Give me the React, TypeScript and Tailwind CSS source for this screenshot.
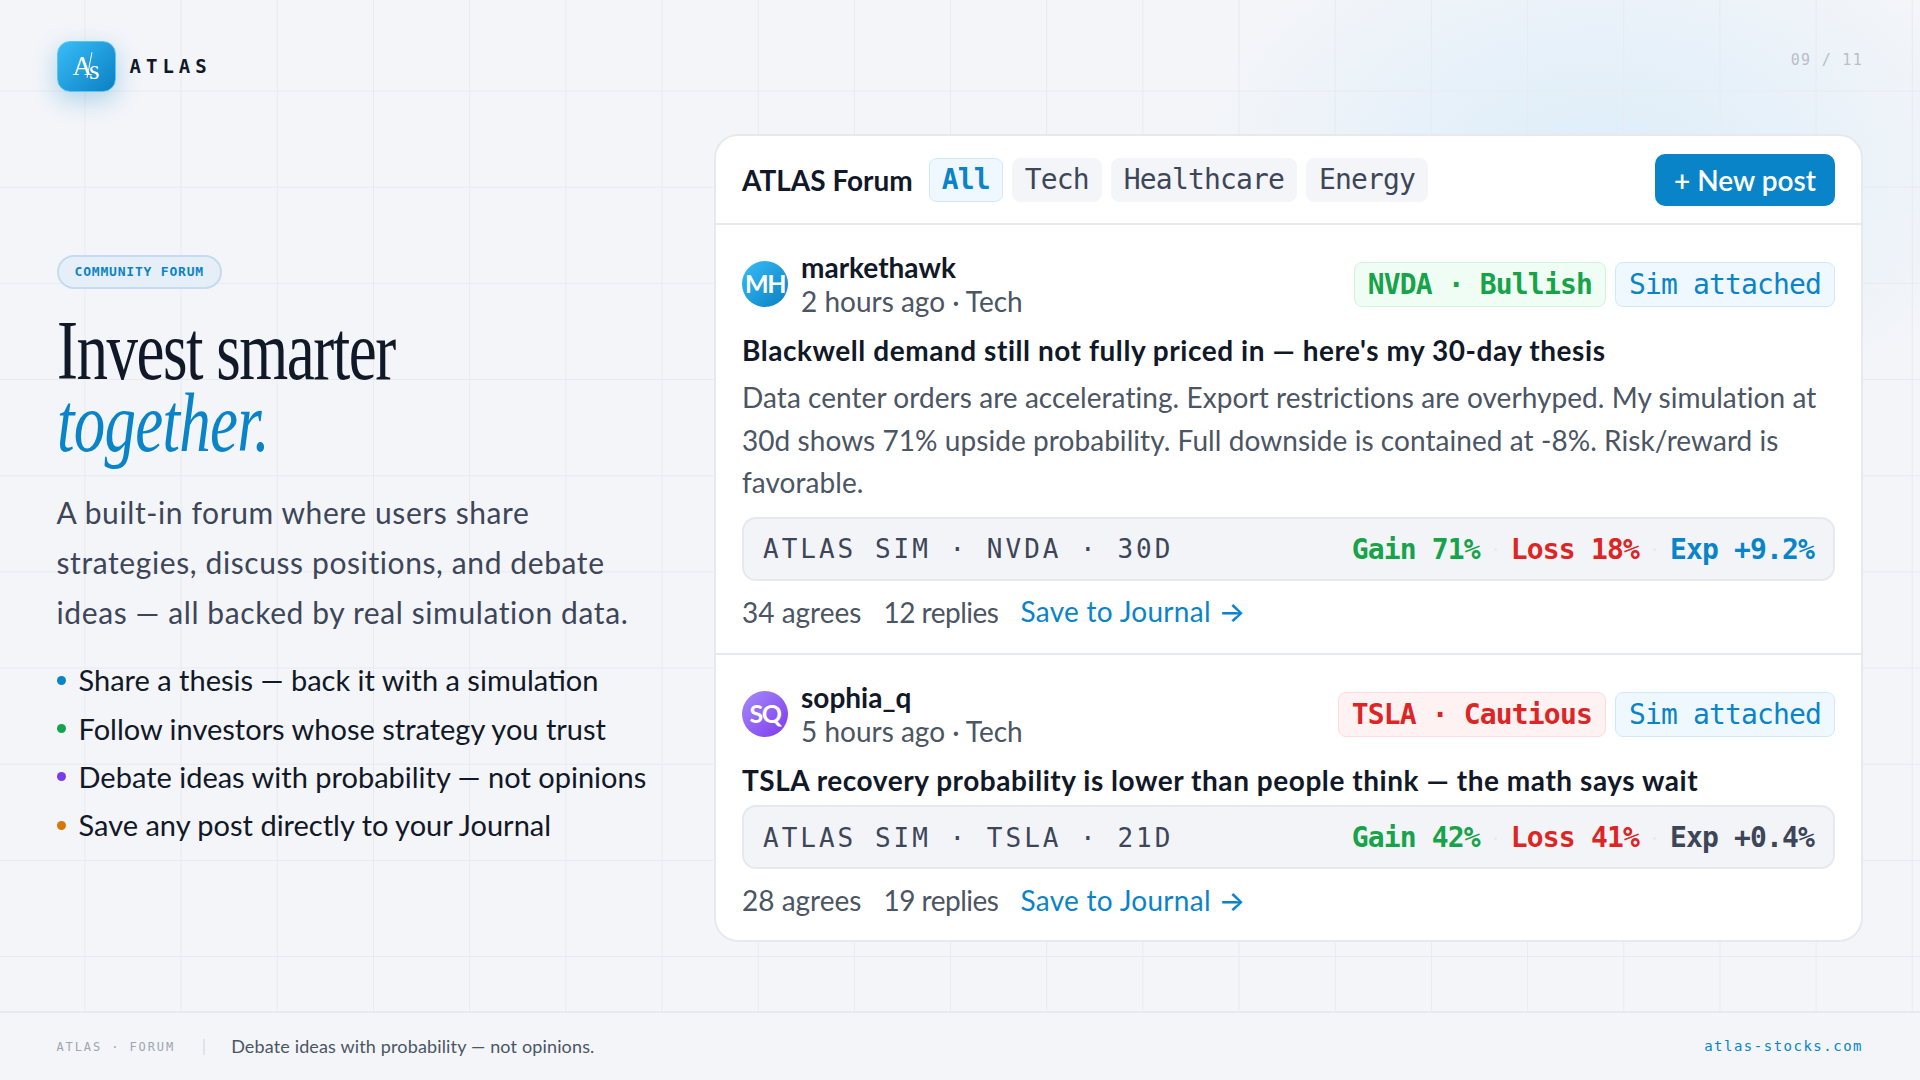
const sans = "font-['Lato',sans-serif]";
const mono = "font-['DejaVu_Sans_Mono',monospace]";

const bullets = [
  { text: "Share a thesis — back it with a simulation", dot: "bg-[#0a84c8]" },
  { text: "Follow investors whose strategy you trust", dot: "bg-[#16a34a]" },
  { text: "Debate ideas with probability — not opinions", dot: "bg-[#7c3aed]" },
  { text: "Save any post directly to your Journal", dot: "bg-[#d97706]" },
];

function Tab({ label, active }: { label: string; active?: boolean }) {
  return (
    <div
      className={`${mono} flex h-11 items-center rounded-lg border px-[12px] text-[28px] tracking-[-0.85px] ${
        active
          ? "border-[#cfe9fb] bg-[#eff8ff] font-bold text-[#0a84c8]"
          : "border-[#f3f5f9] bg-[#f3f5f9] text-[#3d4658]"
      }`}
    >
      {label}
    </div>
  );
}

function Tag({ label, tone }: { label: string; tone: "green" | "red" | "blue" }) {
  const toneClass =
    tone === "green"
      ? "border-[#d3f5df] bg-[#f0fdf4] font-bold text-[#16a34a]"
      : tone === "red"
        ? "border-[#fcdcdc] bg-[#fef2f2] font-bold text-[#dc2626]"
        : "border-[#cfe9fb] bg-[#eff8ff] text-[#0a84c8]";
  return (
    <div className={`${mono} flex h-[45px] items-center rounded-lg border px-[13px] pt-[2px] text-[28px] tracking-[-0.85px] ${toneClass}`}>
      {label}
    </div>
  );
}

function SimBar({
  label,
  gain,
  loss,
  exp,
  expTone,
}: {
  label: string;
  gain: string;
  loss: string;
  exp: string;
  expTone: string;
}) {
  return (
    <div className="flex h-16 items-center justify-between rounded-[14px] border-2 border-[#e6e9f0] bg-[#f3f4f8] px-[19px] pt-[2px]">
      <span className={`${mono} text-[26px] tracking-[3px] text-[#3d4658]`}>{label}</span>
      <div className={`${mono} flex items-center gap-[14px] text-[28px] font-bold tracking-[-0.85px]`}>
        <span className="text-[#16a34a]">Gain {gain}</span>
        <span className="h-[3px] w-[3px] rounded-full bg-[#e6e9f0]" />
        <span className="text-[#dc2626]">Loss {loss}</span>
        <span className="h-[3px] w-[3px] rounded-full bg-[#e6e9f0]" />
        <span className={expTone}>Exp {exp}</span>
      </div>
    </div>
  );
}

function PostHead({
  initials,
  avatar,
  name,
  meta,
  children,
}: {
  initials: string;
  avatar: string;
  name: string;
  meta: string;
  children: React.ReactNode;
}) {
  return (
    <div className="flex items-center justify-between">
      <div className="flex items-center gap-[13px]">
        <div className={`flex h-[46px] w-[46px] items-center justify-center rounded-full text-[25px] font-bold tracking-[-1.5px] text-white ${avatar}`}>
          {initials}
        </div>
        <div>
          <div className="text-[28px] leading-[34px] font-bold text-[#111827]">{name}</div>
          <div className="text-[28px] leading-[34px] text-[#4b5563]">{meta}</div>
        </div>
      </div>
      <div className="flex gap-[9px]">{children}</div>
    </div>
  );
}

function PostActions({ agrees, replies }: { agrees: string; replies: string }) {
  return (
    <div className="mt-[13px] flex h-[36px] items-center text-[28px] text-[#4b5563]">
      <span>{agrees}</span>
      <span className="ml-[22px] tracking-[-0.5px]">{replies}</span>
      <span className="ml-[22px] tracking-[0.3px] text-[#0a84c8]">
        Save to Journal <span className="font-['Inter',sans-serif] font-medium">→</span>
      </span>
    </div>
  );
}

export default function App() {
  return (
    <div
      className={`${sans} flex h-screen w-full flex-col overflow-hidden bg-[#f3f5f9] bg-[linear-gradient(#e8eaf0_1px,transparent_1px),linear-gradient(90deg,#e8eaf0_1px,transparent_1px),radial-gradient(ellipse_400px_260px_at_1600px_170px,#dcedf9,transparent)] bg-[size:96.18px_96.18px,96.18px_96.18px,100%_100%] bg-[position:84.5px_90.5px,84.5px_90.5px,0_0]`}
    >
      <header className="flex h-[134px] shrink-0 justify-between pl-[56.5px] pr-[57px] pt-[41px]">
        <div className="flex h-[51px] items-center gap-[14px]">
          <div className="flex h-[51px] w-[59px] items-center justify-center rounded-[13px] border border-[#5cc3f3] bg-[linear-gradient(135deg,#38bdf8,#0a7fc2)] font-['Liberation_Serif',serif] text-[27px] text-white shadow-[0_8px_24px_rgba(10,132,200,0.3)]">
            <span>A</span>
            <span className="-ml-[3px] -mr-[1px] -mt-1 h-[26px] w-px rotate-[11deg] bg-white" />
            <span className="mt-2">s</span>
          </div>
          <span className={`${mono} text-[19px] font-bold tracking-[5px] text-[#111827]`}>ATLAS</span>
        </div>
        <span className={`${mono} mt-[8px] text-[15px] tracking-[1.3px] text-[#b9bec8]`}>09 / 11</span>
      </header>

      <main className="flex flex-1 pr-[57px]">
        <section className="w-[714px] shrink-0 pl-[56.5px] pr-[40px] pt-[121px]">
          <div className={`${mono} inline-flex h-[34px] items-center rounded-full border-2 border-[#c3dcf0] bg-[#e6eff8] px-[16px] text-[13px] font-bold tracking-[0.8px] text-[#0a84c8]`}>
            COMMUNITY FORUM
          </div>
          <h1 className="mt-[26px] origin-left scale-x-[0.75] whitespace-nowrap font-['Liberation_Serif',serif] text-[84px] leading-[72px] font-normal tracking-[-2px] text-[#111827]">
            Invest smarter
            <br />
            <em className="tracking-[-1px] text-[#0a84c8]">together.</em>
          </h1>
          <p className="mt-[28px] max-w-[590px] text-[30px] leading-[50px] tracking-[0.6px] text-[#3d4658]">
            A built-in forum where users share strategies, discuss positions, and debate ideas — all backed by real
            simulation data.
          </p>
          <ul className="mt-[19px] flex flex-col">
            {bullets.map((b) => (
              <li key={b.text} className="flex h-[48.3px] items-center gap-[13px] text-[29px] text-[#111827]">
                <span className={`h-[9px] w-[9px] shrink-0 rounded-full ${b.dot}`} />
                {b.text}
              </li>
            ))}
          </ul>
        </section>

        <section className="h-[808px] flex-1 overflow-hidden rounded-[24px] border-2 border-[#e6e9f0] bg-white">
          <div className="flex h-[89px] items-center border-b-2 border-[#e6e9f0] px-[26px]">
            <span className="mr-[16px] text-[28px] font-bold text-[#111827]">ATLAS Forum</span>
            <div className="flex gap-[9px]">
              <Tab label="All" active />
              <Tab label="Tech" />
              <Tab label="Healthcare" />
              <Tab label="Energy" />
            </div>
            <button className="ml-auto flex h-[52px] w-[180px] items-center justify-center rounded-[10px] bg-[#0a84c8] text-[28px] font-semibold text-white">
              + New post
            </button>
          </div>

          <article className="h-[430px] border-b-2 border-[#e6e9f0] px-[26px] pt-[25px]">
            <PostHead
              initials="MH"
              avatar="bg-[linear-gradient(135deg,#38bdf8,#0a7fc2)]"
              name="markethawk"
              meta="2 hours ago · Tech"
            >
              <Tag label="NVDA · Bullish" tone="green" />
              <Tag label="Sim attached" tone="blue" />
            </PostHead>
            <h2 className="mt-[12px] text-[28px] leading-[40px] font-bold tracking-[0.55px] text-[#111827]">
              Blackwell demand still not fully priced in — here's my 30-day thesis
            </h2>
            <p className="mt-[6px] text-[28px] leading-[42.5px] tracking-[0.06px] text-[#4b5563]">
              Data center orders are accelerating. Export restrictions are overhyped. My simulation at 30d shows 71%
              upside probability. Full downside is contained at -8%. Risk/reward is favorable.
            </p>
            <div className="mt-[13px]">
              <SimBar label="ATLAS SIM · NVDA · 30D" gain="71%" loss="18%" exp="+9.2%" expTone="text-[#0a84c8]" />
            </div>
            <PostActions agrees="34 agrees" replies="12 replies" />
          </article>

          <article className="px-[26px] pt-[25px]">
            <PostHead
              initials="SQ"
              avatar="bg-[linear-gradient(135deg,#a78bfa,#7c3aed)]"
              name="sophia_q"
              meta="5 hours ago · Tech"
            >
              <Tag label="TSLA · Cautious" tone="red" />
              <Tag label="Sim attached" tone="blue" />
            </PostHead>
            <h2 className="mt-[12px] text-[28px] leading-[40px] font-bold tracking-[0.55px] text-[#111827]">
              TSLA recovery probability is lower than people think — the math says wait
            </h2>
            <div className="mt-[5px]">
              <SimBar label="ATLAS SIM · TSLA · 21D" gain="42%" loss="41%" exp="+0.4%" expTone="text-[#3d4658]" />
            </div>
            <PostActions agrees="28 agrees" replies="19 replies" />
          </article>
        </section>
      </main>

      <footer className="flex h-[69px] shrink-0 items-center border-t-2 border-[#e6e9f0] bg-[#f3f5f9] pl-[56.5px] pr-[57px]">
        <span className={`${mono} text-[12px] tracking-[1.9px] text-[#a0a5b0]`}>ATLAS · FORUM</span>
        <span className="ml-[28px] mr-[26px] h-4 w-0.5 bg-[#e0e3ea]" />
        <span className="text-[18px] tracking-[0.15px] text-[#4b5563]">Debate ideas with probability — not opinions.</span>
        <span className={`${mono} ml-auto text-[14px] tracking-[1.5px] text-[#0a84c8]`}>atlas-stocks.com</span>
      </footer>
    </div>
  );
}
